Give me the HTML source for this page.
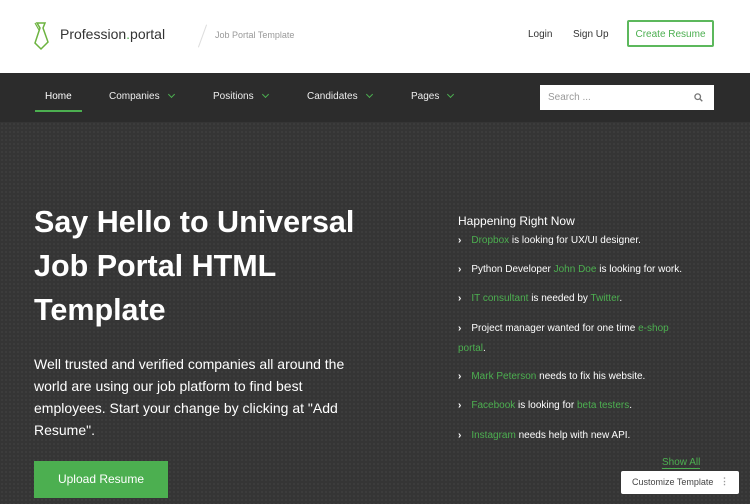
<!DOCTYPE html>
<html><head><style>
*{margin:0;padding:0;box-sizing:border-box}
body{width:750px;height:504px;overflow:hidden;font-family:"Liberation Sans",sans-serif;background:#333;position:relative}
.hdr{height:73px;background:#fff;position:relative}
.nav{position:absolute;top:73px;left:0;width:750px;height:49px;background:#2c2c2c}
.hero{position:absolute;top:122px;left:0;width:750px;height:382px;background-color:#353535;background-image:radial-gradient(#3d3d3d 1px,transparent 1.2px);background-size:4px 4px}
.g{color:#4caf50}
.ni{position:absolute;top:91px;font-size:10px;color:#eee}
.chev{display:inline-block;width:5px;height:5px;border-right:1.5px solid #4caf50;border-bottom:1.5px solid #4caf50;transform:rotate(45deg);margin-left:9px;position:relative;top:-2px}
ul{list-style:none}
li{position:absolute;left:458px;font-size:10px;color:#fff;width:232px;line-height:21px}
li b{font-weight:bold;margin-right:10px}
</style></head><body>
<div class="hdr">
<svg style="position:absolute;left:34px;top:21px" width="16" height="30" viewBox="0 0 16 30"><path d="M3 2h8l-2 5 5 14-7 7-6-6 5-15z" fill="none" stroke="#6cb33f" stroke-width="1.5"/><path d="M1 2l4 7" stroke="#6cb33f" stroke-width="1.2"/></svg>
<div style="position:absolute;left:60px;top:26px;font-size:14px;color:#333">Profession<span class="g">.</span>portal</div>
<div style="position:absolute;left:202px;top:24px;width:1px;height:24px;background:#ddd;transform:rotate(20deg)"></div>
<div style="position:absolute;left:215px;top:30px;font-size:9px;color:#999">Job Portal Template</div>
<div style="position:absolute;left:528px;top:29px;font-size:10px;color:#333">Login</div>
<div style="position:absolute;left:573px;top:29px;font-size:10px;color:#333">Sign Up</div>
<div style="position:absolute;left:627px;top:20px;width:87px;height:27px;border:2px solid #5cb85c;border-radius:2px;font-size:10px;color:#4caf50;text-align:center;line-height:25px">Create Resume</div>
</div>
<div class="nav"></div>
<div class="hero"></div>
<div class="ni" style="left:45px;color:#fff">Home</div>
<div style="position:absolute;left:35px;top:110px;width:47px;height:2px;background:#4caf50"></div>
<div class="ni" style="left:109px">Companies<span class="chev"></span></div>
<div class="ni" style="left:213px">Positions<span class="chev"></span></div>
<div class="ni" style="left:307px">Candidates<span class="chev"></span></div>
<div class="ni" style="left:411px">Pages<span class="chev"></span></div>
<div style="position:absolute;left:540px;top:85px;width:174px;height:25px;background:#fff;font-size:10px;color:#999;padding:7px 8px">Search ...<svg style="position:absolute;right:11px;top:8px" width="9" height="9" viewBox="0 0 9 9"><circle cx="3.7" cy="3.7" r="2.8" fill="none" stroke="#777" stroke-width="1.3"/><path d="M5.8 5.8l2.5 2.5" stroke="#777" stroke-width="1.4"/></svg></div>
<div style="position:absolute;left:34px;top:200px;font-size:30.5px;font-weight:bold;color:#fff;line-height:44px;width:380px">Say Hello to Universal<br>Job Portal HTML<br>Template</div>
<div style="position:absolute;left:34px;top:353px;font-size:14px;color:#fff;line-height:22px;width:320px">Well trusted and verified companies all around the world are using our job platform to find best employees. Start your change by clicking at "Add Resume".</div>
<div style="position:absolute;left:34px;top:461px;width:134px;height:37px;background:#4caf50;color:#fff;font-size:12px;text-align:center;line-height:37px">Upload Resume</div>
<div style="position:absolute;left:458px;top:214px;font-size:12px;color:#fff">Happening Right Now</div>
<ul>
<li style="top:230px"><b>›</b><span class="g">Dropbox</span> is looking for UX/UI designer.</li>
<li style="top:259px"><b>›</b>Python Developer <span class="g">John Doe</span> is looking for work.</li>
<li style="top:288px"><b>›</b><span class="g">IT consultant</span> is needed by <span class="g">Twitter</span>.</li>
<li style="top:319px;line-height:20px"><b>›</b>Project manager wanted for one time <span class="g">e-shop portal</span>.</li>
<li style="top:366px"><b>›</b><span class="g">Mark Peterson</span> needs to fix his website.</li>
<li style="top:395px"><b>›</b><span class="g">Facebook</span> is looking for <span class="g">beta testers</span>.</li>
<li style="top:425px"><b>›</b><span class="g">Instagram</span> needs help with new API.</li>
</ul>
<div style="position:absolute;left:662px;top:457px;font-size:10px;color:#4caf50;border-bottom:1px solid #4caf50">Show All</div>
<div style="position:absolute;left:621px;top:471px;width:118px;height:23px;background:#fff;border-radius:2px;font-size:9px;color:#444;padding:6px 11px">Customize Template<span style="position:absolute;right:10px;top:5px;color:#999;font-weight:bold">⋮</span></div>
</body></html>
